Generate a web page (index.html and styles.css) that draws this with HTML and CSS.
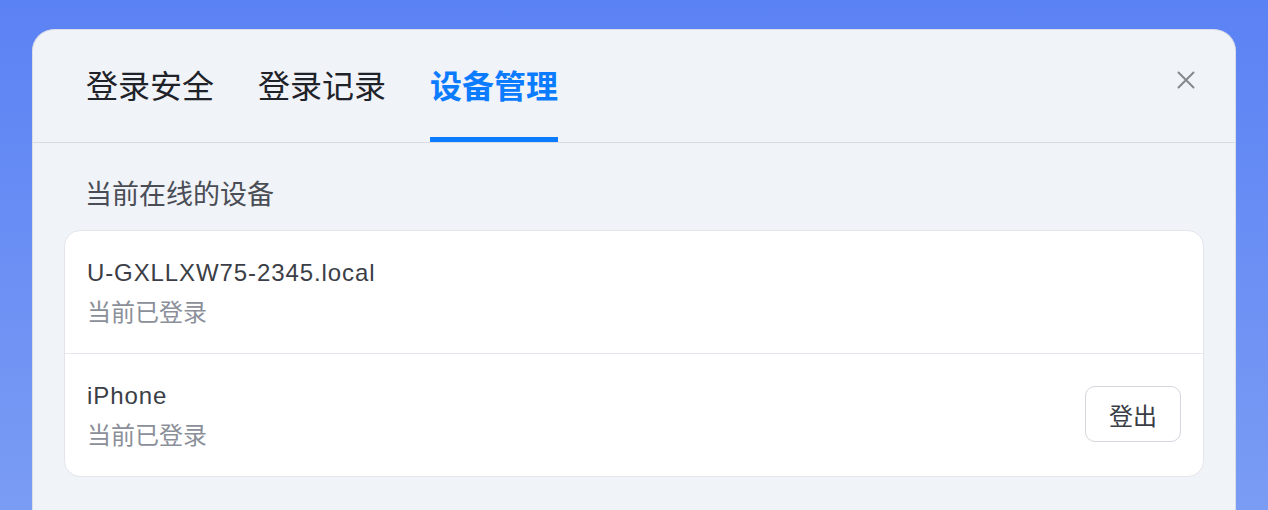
FILE: index.html
```html
<!DOCTYPE html>
<html lang="zh-CN">
<head>
<meta charset="utf-8">
<title>设备管理</title>
<link rel="stylesheet" href="styles.css">
</head>
<body>
<div class="panel">
  <div class="header">
    <div class="tabs">
      <div class="tab">登录安全</div>
      <div class="tab">登录记录</div>
      <div class="tab active">设备管理</div>
    </div>
    <button class="close" aria-label="关闭">
      <svg width="20" height="20" viewBox="0 0 20 20"><path d="M2.5 2.5 L17.5 17.5 M17.5 2.5 L2.5 17.5" stroke="#85888f" stroke-width="2" stroke-linecap="round" fill="none"/></svg>
    </button>
  </div>
  <div class="body">
    <div class="section-title">当前在线的设备</div>
    <div class="card">
      <div class="row">
        <div class="info">
          <div class="name">U-GXLLXW75-2345.local</div>
          <div class="status">当前已登录</div>
        </div>
      </div>
      <div class="row">
        <div class="info">
          <div class="name">iPhone</div>
          <div class="status">当前已登录</div>
        </div>
        <button class="logout">登出</button>
      </div>
    </div>
  </div>
</div>
</body>
</html>
```

FILE: styles.css
```css
html, body {
  margin: 0;
  padding: 0;
  height: 100%;
}
body {
  background: linear-gradient(180deg, #5b82f4 0%, #7a9cf4 100%);
  font-family: "Liberation Sans", "Noto Sans CJK SC", sans-serif;
  overflow: hidden;
}
.panel {
  margin: 29px 0 0 32px;
  width: 1204px;
  height: calc(100vh - 29px);
  background: #f0f3f8;
  border: 1px solid #d9dde6;
  border-bottom: none;
  border-radius: 22px 22px 0 0;
  box-sizing: border-box;
}
.header {
  position: relative;
  height: 113px;
  border-bottom: 1px solid #d8dbe2;
  box-sizing: border-box;
  padding-left: 53px;
}
.tabs {
  display: flex;
  gap: 44px;
  height: 112px;
}
.tab {
  font-family: "Noto Sans CJK SC", sans-serif;
  font-size: 32px;
  line-height: 44px;
  padding-top: 32px;
  box-sizing: border-box;
  height: 112px;
  color: #1f2329;
  border-bottom: 5px solid transparent;
}
.tab.active {
  color: #0b7bff;
  font-weight: 700;
  border-bottom-color: #0b7bff;
}
.close {
  position: absolute;
  top: 40px;
  right: 39px;
  width: 20px;
  height: 20px;
  padding: 0;
  border: none;
  background: none;
  display: flex;
}
.body {
  padding: 32px 31px 0 31px;
}
.section-title {
  font-family: "Noto Sans CJK SC", sans-serif;
  font-size: 27px;
  line-height: 36px;
  color: #4a4d55;
  padding-left: 21px;
  margin-bottom: 19px;
}
.card {
  background: #ffffff;
  border: 1px solid #e2e5ea;
  border-radius: 16px;
}
.row {
  display: flex;
  align-items: center;
  justify-content: space-between;
  padding: 22px 22px 20px 22px;
}
.row + .row {
  border-top: 1px solid #e5e7ec;
}
.name {
  font-size: 24px;
  line-height: 40px;
  letter-spacing: 0.9px;
  color: #3b3e46;
}
.status {
  font-family: "Noto Sans CJK SC", sans-serif;
  font-size: 24px;
  line-height: 40px;
  color: #8b8f99;
  margin-top: -2px;
  margin-bottom: 2px;
}
.logout {
  width: 96px;
  height: 56px;
  background: #ffffff;
  border: 1px solid #d3d6dc;
  border-radius: 10px;
  font-family: "Noto Sans CJK SC", sans-serif;
  font-size: 24px;
  color: #3a3d45;
  padding: 0;
  margin-top: -4px;
}
```
